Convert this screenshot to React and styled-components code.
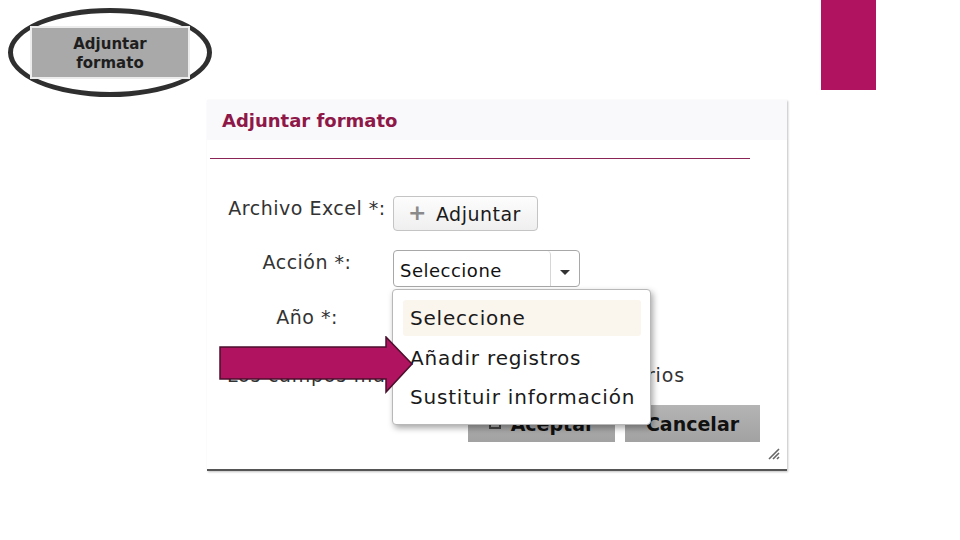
import React from "react";
import styled, { createGlobalStyle } from "styled-components";

const GlobalStyle = createGlobalStyle`
  html, body {
    margin: 0;
    padding: 0;
    background: #fff;
  }
  body {
    width: 960px;
    height: 540px;
    overflow: hidden;
    font-family: "DejaVu Sans", Verdana, sans-serif;
  }
`;

const Slide = styled.div`
  width: 960px;
  height: 540px;
  display: flex;
  flex-direction: column;
`;

const TopRow = styled.div`
  height: 100px;
  display: flex;
  justify-content: space-between;
  align-items: flex-start;
`;

const Oval = styled.div`
  margin: 8px 0 0 8px;
  width: 194px;
  height: 79px;
  border: 5px solid #2f2f2f;
  border-radius: 50%;
  display: flex;
  align-items: center;
  justify-content: center;
`;

const ShotButton = styled.div`
  width: 156px;
  height: 46px;
  padding-top: 3px;
  box-sizing: content-box;
  background: #a9a9a9;
  border: 2px solid #ececec;
  display: flex;
  flex-direction: column;
  align-items: center;
  justify-content: center;
  font-weight: bold;
  font-size: 15px;
  line-height: 19px;
  color: #1e1e1e;
`;

const AccentBar = styled.div`
  width: 55px;
  height: 90px;
  margin-right: 84px;
  background: #b0135f;
`;

const Dialog = styled.div`
  position: relative;
  margin-left: 207px;
  width: 580px;
  height: 369px;
  background: #fff;
  border-bottom: 2px solid #555;
  box-shadow: 1px 1px 2px rgba(0, 0, 0, 0.25);
  display: flex;
  flex-direction: column;
`;

const Header = styled.div`
  height: 40px;
  background: #f9f9fb;
  display: flex;
  align-items: center;
  padding-left: 15px;
`;

const Title = styled.h2`
  margin: 0;
  font-size: 18px;
  font-weight: bold;
  color: #8e1848;
`;

const Divider = styled.div`
  margin: 18px 0 0 3px;
  width: 540px;
  height: 1px;
  background: #8b2456;
`;

const Form = styled.div`
  display: flex;
  flex-direction: column;
  padding: 36px 0 0 20px;
`;

const Row = styled.div`
  display: flex;
  align-items: flex-start;
  height: ${(p) => p.h}px;
`;

const Label = styled.div`
  width: 160px;
  text-align: center;
  font-size: 19px;
  letter-spacing: 0.5px;
  line-height: 22px;
  color: #333;
  white-space: nowrap;
  padding-top: ${(p) => p.top || 0}px;
`;

const Control = styled.div`
  position: relative;
  margin-left: 6px;
`;

const AttachButton = styled.div`
  width: 145px;
  height: 35px;
  margin-top: 1px;
  box-sizing: border-box;
  border: 1px solid #c4c4c4;
  border-radius: 4px;
  background: linear-gradient(#fdfdfd, #efefef);
  display: flex;
  align-items: center;
  padding-left: 14px;
  gap: 9px;
  font-size: 19px;
  letter-spacing: 0.5px;
  color: #1a1a1a;
`;

const Plus = styled.span`
  font-size: 22px;
  font-weight: bold;
  color: #8a8a8a;
  line-height: 1;
  margin-top: -2px;
`;

const Select = styled.div`
  width: 187px;
  height: 37px;
  margin-top: 1px;
  box-sizing: border-box;
  border: 1px solid #a8a8a8;
  border-radius: 4px;
  display: flex;
  background: #fff;
`;

const SelectText = styled.div`
  flex: 1;
  display: flex;
  align-items: center;
  padding: 4px 0 0 6px;
  font-size: 18px;
  letter-spacing: 0.5px;
  color: #111;
  border-right: 1px solid #d6d6d6;
  border-radius: 0 4px 0 0;
`;

const SelectArrow = styled.div`
  width: 28px;
  display: flex;
  align-items: center;
  justify-content: center;
  padding-top: 8px;
  &::after {
    content: "";
    border-left: 5px solid transparent;
    border-right: 5px solid transparent;
    border-top: 5px solid #333;
  }
`;

const Menu = styled.ul`
  position: absolute;
  top: 40px;
  left: -1px;
  width: 259px;
  height: 136px;
  box-sizing: border-box;
  margin: 0;
  padding: 10px 9px 0 10px;
  list-style: none;
  background: #fff;
  border: 1px solid #b8b8b8;
  border-radius: 4px;
  box-shadow: 2px 3px 6px rgba(0, 0, 0, 0.35);
  z-index: 2;
`;

const MenuItem = styled.li`
  height: ${(p) => (p.active ? 36 : 39)}px;
  display: flex;
  align-items: center;
  padding-left: 7px;
  border-radius: 3px;
  background: ${(p) => (p.active ? "#faf6ee" : "transparent")};
  font-size: 20px;
  letter-spacing: 0.8px;
  color: #1a1a1a;
  white-space: nowrap;
  &:nth-child(2) {
    margin-top: 2px;
  }
`;

const Note = styled.div`
  margin-top: 15px;
  font-size: 19px;
  letter-spacing: 0.8px;
  color: #333;
  white-space: nowrap;
`;

const Actions = styled.div`
  display: flex;
  gap: 10px;
  padding: 19px 0 0 261px;
`;

const GrayButton = styled.div`
  width: ${(p) => p.w}px;
  height: 37px;
  background: linear-gradient(#b4b4b4, #a2a2a2);
  display: flex;
  align-items: center;
  justify-content: center;
  gap: 10px;
  font-size: 19px;
  font-weight: bold;
  color: #111;
`;

const DiskIcon = styled.span`
  width: 12px;
  height: 11px;
  border: 2px solid #444;
  box-sizing: border-box;
`;

const Grip = styled.svg`
  position: absolute;
  right: 7px;
  bottom: 9px;
`;

const Pointer = styled.svg`
  position: absolute;
  left: 12px;
  top: 236px;
  z-index: 3;
`;

export default function App() {
  return (
    <Slide>
      <GlobalStyle />
      <TopRow>
        <Oval>
          <ShotButton>
            <span>Adjuntar</span>
            <span>formato</span>
          </ShotButton>
        </Oval>
        <AccentBar />
      </TopRow>
      <Dialog>
        <Header>
          <Title>Adjuntar formato</Title>
        </Header>
        <Divider />
        <Form>
          <Row h={54}>
            <Label top={2}>Archivo Excel *:</Label>
            <Control>
              <AttachButton>
                <Plus>+</Plus>
                Adjuntar
              </AttachButton>
            </Control>
          </Row>
          <Row h={55}>
            <Label top={2}>Acción *:</Label>
            <Control>
              <Select>
                <SelectText>Seleccione</SelectText>
                <SelectArrow />
              </Select>
              <Menu>
                <MenuItem active>Seleccione</MenuItem>
                <MenuItem>Añadir registros</MenuItem>
                <MenuItem>Sustituir información</MenuItem>
              </Menu>
            </Control>
          </Row>
          <Row h={45}>
            <Label top={2}>Año *:</Label>
          </Row>
          <Note>Los campos marcados con * son obligatorios</Note>
        </Form>
        <Actions>
          <GrayButton w={147}>
            <DiskIcon />
            Aceptar
          </GrayButton>
          <GrayButton w={135}>Cancelar</GrayButton>
        </Actions>
        <Grip width="12" height="12" viewBox="0 0 12 12">
          <path d="M11 1 L1 11 M11 5 L5 11 M11 9 L9 11" stroke="#666" strokeWidth="1.6" />
        </Grip>
        <Pointer width="196" height="60" viewBox="0 0 196 60">
          <polygon
            points="1,11 167,11 167,1 193,28 167,56 167,43 1,43"
            fill="#b0135f"
            stroke="#4a0f2c"
            strokeWidth="1.5"
          />
        </Pointer>
      </Dialog>
    </Slide>
  );
}
